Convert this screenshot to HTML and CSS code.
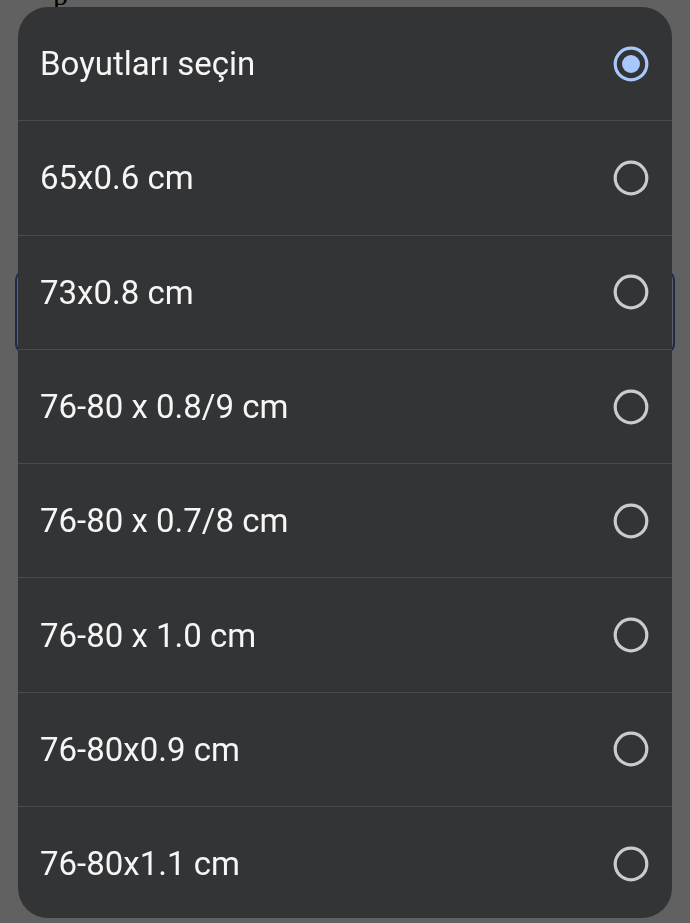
FILE: index.html
```html
<!DOCTYPE html>
<html lang="tr">
<head>
    <meta charset="UTF-8">
    <meta name="viewport" content="width=device-width, initial-scale=1.0">
    <title>Boyutları seçin</title>
    <link rel="stylesheet" href="styles.css">
</head>
<body>
<div class="page">
    <div class="page-text">p</div>
    <div class="field"></div>
</div>

<div class="dialog" role="dialog" aria-label="Boyutları seçin">
    <div class="option">
        <span class="label">Boyutları seçin</span>
        <svg class="radio checked" viewBox="0 0 36 36" aria-hidden="true">
            <circle cx="18" cy="18" r="15.8" fill="none" stroke="currentColor" stroke-width="3.2"/>
            <circle cx="18" cy="18" r="9" fill="currentColor"/>
        </svg>
    </div>
    <div class="option">
        <span class="label">65x0.6 cm</span>
        <svg class="radio" viewBox="0 0 36 36" aria-hidden="true">
            <circle cx="18" cy="18" r="15.8" fill="none" stroke="currentColor" stroke-width="3.2"/>
        </svg>
    </div>
    <div class="option">
        <span class="label">73x0.8 cm</span>
        <svg class="radio" viewBox="0 0 36 36" aria-hidden="true">
            <circle cx="18" cy="18" r="15.8" fill="none" stroke="currentColor" stroke-width="3.2"/>
        </svg>
    </div>
    <div class="option">
        <span class="label">76-80 x 0.8/9 cm</span>
        <svg class="radio" viewBox="0 0 36 36" aria-hidden="true">
            <circle cx="18" cy="18" r="15.8" fill="none" stroke="currentColor" stroke-width="3.2"/>
        </svg>
    </div>
    <div class="option">
        <span class="label">76-80 x 0.7/8 cm</span>
        <svg class="radio" viewBox="0 0 36 36" aria-hidden="true">
            <circle cx="18" cy="18" r="15.8" fill="none" stroke="currentColor" stroke-width="3.2"/>
        </svg>
    </div>
    <div class="option">
        <span class="label">76-80 x 1.0 cm</span>
        <svg class="radio" viewBox="0 0 36 36" aria-hidden="true">
            <circle cx="18" cy="18" r="15.8" fill="none" stroke="currentColor" stroke-width="3.2"/>
        </svg>
    </div>
    <div class="option">
        <span class="label">76-80x0.9 cm</span>
        <svg class="radio" viewBox="0 0 36 36" aria-hidden="true">
            <circle cx="18" cy="18" r="15.8" fill="none" stroke="currentColor" stroke-width="3.2"/>
        </svg>
    </div>
    <div class="option">
        <span class="label">76-80x1.1 cm</span>
        <svg class="radio" viewBox="0 0 36 36" aria-hidden="true">
            <circle cx="18" cy="18" r="15.8" fill="none" stroke="currentColor" stroke-width="3.2"/>
        </svg>
    </div>
</div>
</body>
</html>
```

FILE: styles.css
```css
:root {
    --scrim: #616161;
    --dialog-bg: #333436;
    --divider: #4a4b4d;
    --text-color: #f6f6f6;
    --radio-on: #a8c7fa;
    --radio-off: #c9cbcc;
}
body {
    margin: 0;
    height: 923px;
    overflow: hidden;
    background-color: var(--scrim);
    font-family: Roboto, 'Noto Sans', sans-serif;
}
.page {
    padding: 0 15px;
}
.page-text {
    font-family: 'Liberation Serif', serif;
    font-size: 30px;
    line-height: 30px;
    margin-top: -20px;
    padding-left: 38px;
    color: #000;
}
.field {
    margin-top: 260px;
    height: 80px;
    border: 2px solid #1d2a4c;
    border-radius: 10px;
}
.dialog {
    position: fixed;
    top: 7px;
    left: 18px;
    width: 654px;
    height: 911px;
    background-color: var(--dialog-bg);
    border-radius: 30px;
    overflow: hidden;
}
.option {
    height: 113.3px;
    display: flex;
    align-items: center;
    justify-content: space-between;
    padding: 0 23px 0 22px;
    border-bottom: 1px solid var(--divider);
}
.option:last-child {
    border-bottom: none;
}
.label {
    color: var(--text-color);
    font-size: 33px;
}
.radio {
    width: 36px;
    height: 36px;
    color: var(--radio-off);
}
.radio.checked {
    color: var(--radio-on);
}
```
